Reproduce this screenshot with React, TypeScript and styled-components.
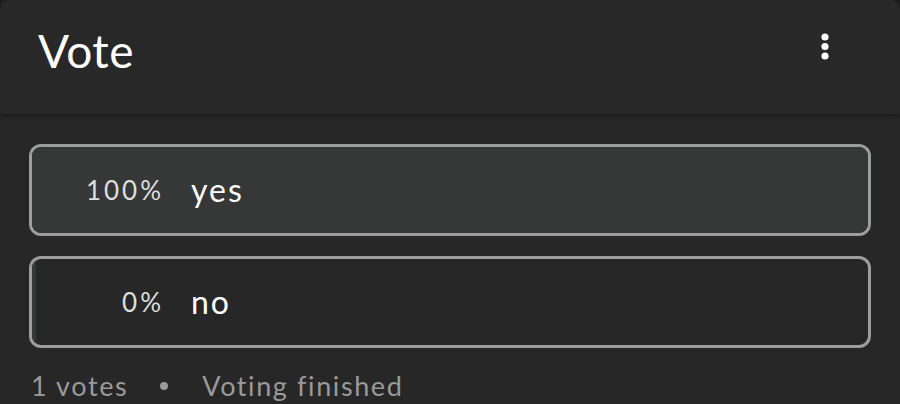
import React from "react";
import styled, {createGlobalStyle} from "styled-components";

const Global = createGlobalStyle`
  html, body {
    margin: 0;
    padding: 0;
    background: #1e1e1e;
  }
  body {
    font-family: Lato, "Noto Sans", sans-serif;
  }
`;

const Card = styled.div`
  height: 404px;
  overflow: hidden;
  background: #272727;
  border-radius: 10px 10px 0 0;
  display: flex;
  flex-direction: column;
`;

const Header = styled.div`
  height: 114px;
  flex-shrink: 0;
  display: flex;
  align-items: flex-start;
  justify-content: space-between;
  padding: 0 63px 0 38px;
  background: #282828;
  box-shadow: 0 2px 6px rgba(0, 0, 0, 0.35);
  position: relative;
  z-index: 1;
`;

const Title = styled.h1`
  margin: 0;
  padding-top: 24px;
  font-size: 46px;
  font-weight: 400;
  line-height: 54px;
  letter-spacing: 0.5px;
  color: #ffffff;
`;

const MenuButton = styled.button`
  margin-top: 33px;
  width: 24px;
  height: 32px;
  padding: 0;
  border: none;
  background: none;
  display: flex;
  align-items: flex-start;
  justify-content: center;
`;

const Body = styled.div`
  padding: 30px 29px 0;
  display: flex;
  flex-direction: column;
  gap: 20px;
`;

const Option = styled.div`
  position: relative;
  height: 92px;
  box-sizing: border-box;
  border: 3px solid #9d9d9d;
  border-radius: 12px;
  overflow: hidden;
  display: flex;
  align-items: center;
`;

const Fill = styled.div`
  position: absolute;
  left: 0;
  top: 0;
  bottom: 0;
  min-width: 4px;
  background: #363838;
`;

const Percent = styled.span`
  position: relative;
  width: 132px;
  flex-shrink: 0;
  text-align: right;
  font-size: 26px;
  font-weight: 400;
  letter-spacing: 3px;
  color: #dedede;
`;

const Label = styled.span`
  position: relative;
  margin-left: 27px;
  font-size: 32px;
  letter-spacing: 2px;
  color: #ffffff;
  padding-bottom: 1px;
`;

const Footer = styled.div`
  display: flex;
  align-items: center;
  padding: 21px 31px 0;
  font-size: 27px;
  letter-spacing: 1.6px;
  color: #9a9a9a;
`;

const Dot = styled.span`
  width: 8px;
  height: 8px;
  border-radius: 50%;
  background: #9a9a9a;
  margin: 0 34px 0 32px;
`;

const options = [
  {label: "yes", pct: 100},
  {label: "no", pct: 0},
];

export default function App() {
  return <>
    <Global/>
    <Card>
      <Header>
        <Title>Vote</Title>
        <MenuButton aria-label="menu">
          <svg width="8" height="28" viewBox="0 0 8 28">
            <circle cx="4" cy="4" r="3.6" fill="#fff"/>
            <circle cx="4" cy="13.5" r="3.6" fill="#fff"/>
            <circle cx="4" cy="23" r="3.6" fill="#fff"/>
          </svg>
        </MenuButton>
      </Header>
      <Body>
        {options.map(o => <Option key={o.label}>
          <Fill style={{width: `${o.pct}%`}}/>
          <Percent>{o.pct}%</Percent>
          <Label>{o.label}</Label>
        </Option>)}
      </Body>
      <Footer>
        <span>1 votes</span>
        <Dot/>
        <span>Voting finished</span>
      </Footer>
    </Card>
  </>;
}
